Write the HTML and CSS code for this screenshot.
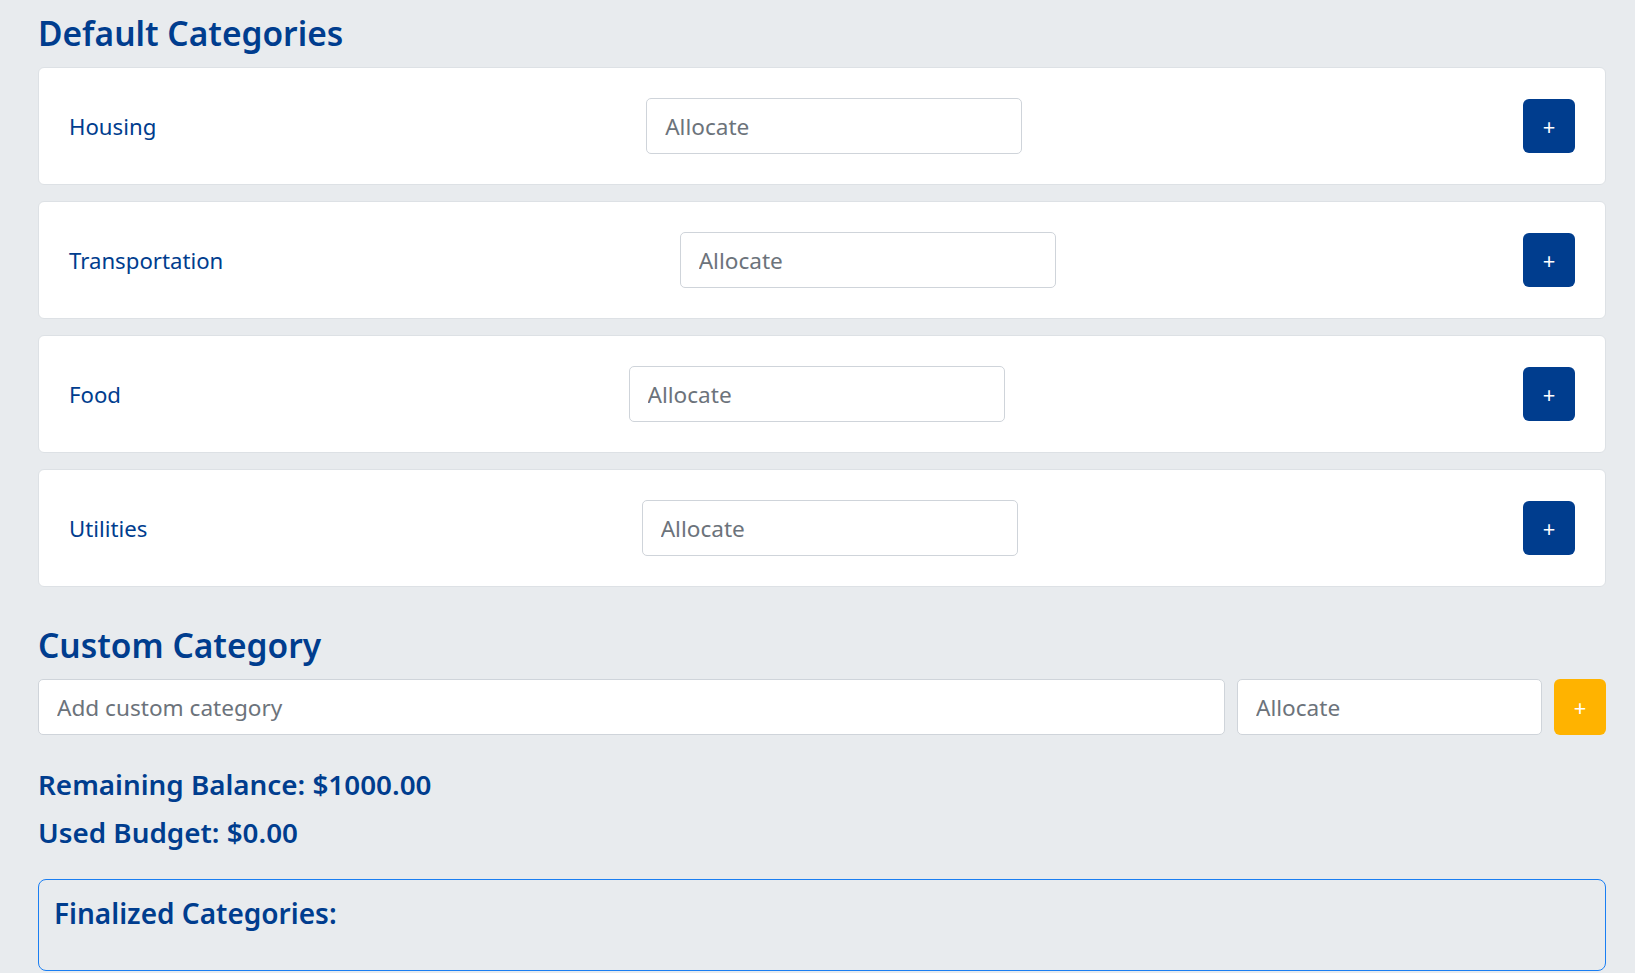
FILE: index.html
```html
<!DOCTYPE html>
<html lang="en">
<head>
<meta charset="utf-8">
<title>Budget Categories</title>
<link rel="stylesheet" href="styles.css">
</head>
<body>
<main class="page">
  <h2 class="section-title">Default Categories</h2>
  <div class="category-list">
    <div class="category-card">
      <span class="category-name">Housing</span>
      <input class="field field-allocate" type="text" placeholder="Allocate">
      <button class="add-btn add-btn-row" type="button">+</button>
    </div>
    <div class="category-card">
      <span class="category-name">Transportation</span>
      <input class="field field-allocate" type="text" placeholder="Allocate">
      <button class="add-btn add-btn-row" type="button">+</button>
    </div>
    <div class="category-card">
      <span class="category-name">Food</span>
      <input class="field field-allocate" type="text" placeholder="Allocate">
      <button class="add-btn add-btn-row" type="button">+</button>
    </div>
    <div class="category-card">
      <span class="category-name">Utilities</span>
      <input class="field field-allocate" type="text" placeholder="Allocate">
      <button class="add-btn add-btn-row" type="button">+</button>
    </div>
  </div>

  <h2 class="section-title custom-title">Custom Category</h2>
  <div class="custom-row">
    <input class="field field-custom" type="text" placeholder="Add custom category">
    <input class="field field-custom-allocate" type="text" placeholder="Allocate">
    <button class="add-btn add-btn-warn" type="button">+</button>
  </div>

  <div class="summary">
    <p class="summary-line">Remaining Balance: $1000.00</p>
    <p class="summary-line">Used Budget: $0.00</p>
  </div>

  <section class="finalized">
    <h4 class="finalized-title">Finalized Categories:</h4>
  </section>
</main>
</body>
</html>
```
FILE: styles.css
```css
* { box-sizing: border-box; }

html, body {
  margin: 0;
  padding: 0;
  background: #e8ebee;
}

body {
  font-family: "Noto Sans", "Open Sans", sans-serif;
  color: #003d8e;
  overflow: hidden;
}

.page {
  width: 1568px;
  margin-left: 38px;
  padding-top: 13px;
}

.section-title {
  margin: 0 0 14px;
  font-size: 33.5px;
  line-height: 40px;
  font-weight: 600;
  color: #003d8e;
}

.custom-title {
  margin-top: 38px;
}

.category-list {
  display: flex;
  flex-direction: column;
  gap: 16px;
}

.category-card {
  display: flex;
  align-items: center;
  justify-content: space-between;
  height: 118px;
  padding: 0 30px 0 30px;
  background: #ffffff;
  border: 1px solid #dde1e5;
  border-radius: 6px;
}

.category-name {
  font-size: 22.2px;
  color: #003d8e;
}

.field {
  height: 56px;
  padding: 0 18px;
  font-family: inherit;
  font-size: 22.6px;
  color: #333;
  background: #ffffff;
  border: 1px solid #cfd4da;
  border-radius: 5px;
  outline: none;
}

.field::placeholder {
  color: #6c737b;
}

.field-allocate {
  width: 376px;
}

.add-btn {
  width: 52px;
  height: 54px;
  padding: 0;
  font-family: inherit;
  font-size: 22px;
  line-height: 1;
  color: #ffffff;
  background: #003d8e;
  border: none;
  border-radius: 6px;
}

.add-btn-row {
  margin-left: 11px;
}

.custom-row {
  display: flex;
  gap: 12px;
  align-items: center;
}

.field-custom {
  flex: 1;
}

.field-custom-allocate {
  width: 305px;
}

.add-btn-warn {
  height: 56px;
  background: #ffb300;
}

.summary {
  margin-top: 32px;
}

.summary-line {
  margin: 0 0 14px;
  font-size: 27.8px;
  line-height: 34px;
  font-weight: 600;
}

.summary-line:last-child {
  margin-bottom: 0;
}

.finalized {
  margin-top: 30px;
  padding: 16px 15px 40px;
  border: 1px solid #1a7ef2;
  border-radius: 8px;
}

.finalized-title {
  margin: 0;
  font-size: 28px;
  line-height: 34px;
  font-weight: 600;
}
```
